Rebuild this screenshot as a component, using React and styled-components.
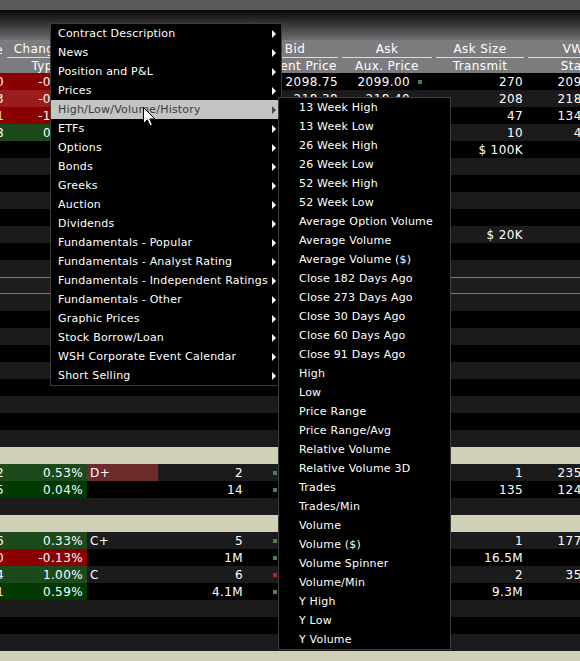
import React from "react";
import styled, { createGlobalStyle } from "styled-components";

const GlobalStyle = createGlobalStyle`
  html, body { margin: 0; padding: 0; background: #000; }
  body { overflow: hidden; }
`;

const Page = styled.div`
  position: relative;
  width: 580px;
  height: 661px;
  overflow: hidden;
  background: #000;
  font-family: "DejaVu Sans", Verdana, sans-serif;
`;

const TopStrip = styled.div`
  height: 10px;
  background: #5a5a5a;
`;

const HeaderFade = styled.div`
  height: 30px;
  background: linear-gradient(#080808 0%, #2a2a2a 35%, #6e6e71 100%);
`;

const HeaderRow = styled.div`
  display: flex;
  height: ${(p) => p.$h}px;
  background: #7c7c7f;
  color: #fff;
  font-size: 12px;
  letter-spacing: 0.4px;
  width: 640px;
`;

const HeadCell = styled.div`
  flex: 0 0 ${(p) => p.$w}px;
  min-width: 0;
  display: flex;
  justify-content: ${(p) => p.$justify || "center"};
  align-items: stretch;
  white-space: nowrap;
  padding: 0 2px;
  box-sizing: border-box;
`;

const HeadLabel = styled.div`
  flex: 1 1 auto;
  min-width: 0;
  display: flex;
  align-items: center;
  justify-content: ${(p) => p.$justify || "center"};
  border-bottom: ${(p) => (p.$line ? "1px solid #dcdcdc" : "none")};
  box-sizing: border-box;
  padding-top: 1px;
`;

const TONES = {
  black: "#000",
  dark: "#1b1b1b",
  beige: "#d0cfb8",
  section: "#1d1d1f",
};

const Row = styled.div`
  display: flex;
  height: 17px;
  width: 640px;
  box-sizing: border-box;
  background: ${(p) => TONES[p.$tone]};
  border-top: ${(p) => (p.$tone === "section" ? "1px solid #7b7b7b" : "none")};
  border-bottom: ${(p) => (p.$tone === "section" ? "1px solid #7b7b7b" : "none")};
  color: #fff;
  font-size: 12px;
  letter-spacing: 0.4px;
`;

const CELL_BG = {
  red: "#8a0000",
  redLight: "#9a1c1c",
  green: "#1d4a1d",
  greenDark: "#003a00",
  rating: "#6c2a2a",
};

const Cell = styled.div`
  flex: 0 0 ${(p) => p.$w}px;
  min-width: 0;
  display: flex;
  align-items: center;
  justify-content: ${(p) => (p.$left ? "flex-start" : "flex-end")};
  padding-left: ${(p) => p.$pl || 0}px;
  padding-right: ${(p) => p.$pr || 0}px;
  box-sizing: border-box;
  white-space: nowrap;
  background: ${(p) => (p.$bg ? CELL_BG[p.$bg] : "transparent")};
  gap: ${(p) => p.$gap || 0}px;
`;

const BidCell = styled.div`
  flex: 0 0 90px;
  min-width: 0;
  display: flex;
  align-items: center;
  padding-left: 23px;
  padding-right: 2px;
  box-sizing: border-box;
  white-space: nowrap;
`;

const Value = styled.span`
  margin-left: auto;
`;

const Marker = styled.span`
  width: 4px;
  height: 4px;
  flex: 0 0 4px;
  background: ${(p) => (p.$c === "r" ? "#c41e1e" : "#4c7f4c")};
`;

const Gap = styled.span`
  flex: 0 0 4px;
`;

const Menu = styled.div`
  position: absolute;
  left: ${(p) => p.$x}px;
  top: ${(p) => p.$y}px;
  width: ${(p) => p.$w}px;
  box-sizing: border-box;
  background: #000;
  border: 1px solid #3e3e3e;
  font-family: "DejaVu Sans", Verdana, sans-serif;
  font-size: 11px;
  letter-spacing: 0.2px;
  color: #fff;
  z-index: ${(p) => p.$z};
`;

const MenuItem = styled.div`
  height: 19px;
  display: flex;
  align-items: center;
  padding-left: ${(p) => p.$pl}px;
  padding-right: 5px;
  white-space: nowrap;
  background: ${(p) => (p.$active ? "#c4c4c4" : "transparent")};
  color: ${(p) => (p.$active ? "#3a3a3a" : "#fff")};
`;

const ArrowIcon = styled.svg`
  margin-left: auto;
  flex: 0 0 4px;
`;

const Cursor = styled.svg`
  position: absolute;
  left: 143px;
  top: 107px;
  z-index: 10;
`;

const mainItems = [
  "Contract Description",
  "News",
  "Position and P&L",
  "Prices",
  "High/Low/Volume/History",
  "ETFs",
  "Options",
  "Bonds",
  "Greeks",
  "Auction",
  "Dividends",
  "Fundamentals - Popular",
  "Fundamentals - Analyst Rating",
  "Fundamentals - Independent Ratings",
  "Fundamentals - Other",
  "Graphic Prices",
  "Stock Borrow/Loan",
  "WSH Corporate Event Calendar",
  "Short Selling",
];

const subItems = [
  "13 Week High",
  "13 Week Low",
  "26 Week High",
  "26 Week Low",
  "52 Week High",
  "52 Week Low",
  "Average Option Volume",
  "Average Volume",
  "Average Volume ($)",
  "Close 182 Days Ago",
  "Close 273 Days Ago",
  "Close 30 Days Ago",
  "Close 60 Days Ago",
  "Close 91 Days Ago",
  "High",
  "Low",
  "Price Range",
  "Price Range/Avg",
  "Relative Volume",
  "Relative Volume 3D",
  "Trades",
  "Trades/Min",
  "Volume",
  "Volume ($)",
  "Volume Spinner",
  "Volume/Min",
  "Y High",
  "Y Low",
  "Y Volume",
];

const rows = [
  { tone: "black", bg: "red", c1: "2098.50", c2: "-0.05%", bid: "2098.75", ask: "2099.00", askMark: "g", size: "270", vw: "2098.89" },
  { tone: "dark", bg: "redLight", c1: "218.33", c2: "-0.12%", bid: "218.38", ask: "218.40", size: "208", vw: "218.392" },
  { tone: "black", bg: "red", c1: "134.41", c2: "-1.10%", bid: "134.05", ask: "134.08", size: "47", vw: "134.065" },
  { tone: "dark", bg: "green", c1: "41.18", c2: "0.83%", bid: "41.24", ask: "41.26", size: "10", vw: "41.25" },
  { tone: "black", size: "$ 100K" },
  { tone: "dark" },
  { tone: "black" },
  { tone: "dark" },
  { tone: "black" },
  { tone: "dark", size: "$ 20K" },
  { tone: "black" },
  { tone: "dark" },
  { tone: "section" },
  { tone: "dark" },
  { tone: "black" },
  { tone: "dark" },
  { tone: "black" },
  { tone: "dark" },
  { tone: "black" },
  { tone: "dark" },
  { tone: "black" },
  { tone: "dark" },
  { tone: "beige" },
  { tone: "dark", bg: "green", c1: "112", c2: "0.53%", rating: "D+", ratingBg: true, c4: "2", bidMark: "g", size: "1", vw: "2350.75" },
  { tone: "black", bg: "greenDark", c1: "25", c2: "0.04%", c4: "14", bidMark: "g", size: "135", vw: "1245.25" },
  { tone: "dark" },
  { tone: "beige" },
  { tone: "dark", bg: "green", c1: "56", c2: "0.33%", rating: "C+", c4: "5", bidMark: "g", size: "1", vw: "1775.50" },
  { tone: "black", bg: "red", c1: "90", c2: "-0.13%", c4: "1M", bidMark: "g", size: "16.5M" },
  { tone: "dark", bg: "green", c1: "34", c2: "1.00%", rating: "C", c4: "6", bidMark: "r", size: "2", vw: "355.25" },
  { tone: "black", bg: "greenDark", c1: "1", c2: "0.59%", c4: "4.1M", bidMark: "g", size: "9.3M" },
  { tone: "dark" },
  { tone: "black" },
  { tone: "dark" },
  { tone: "beige" },
];

function Arrow({ color }) {
  return (
    <ArrowIcon width="4" height="8" viewBox="0 0 4 8">
      <polygon points="0,0 4,4 0,8" fill={color} />
    </ArrowIcon>
  );
}

export default function App() {
  return (
    <>
      <GlobalStyle />
      <Page>
        <TopStrip />
        <HeaderFade />
        <HeaderRow $h={18}>
          <HeadCell $w={5} $justify="flex-end">
            <HeadLabel $justify="flex-end">Price</HeadLabel>
          </HeadCell>
          <HeadCell $w={82}>
            <HeadLabel $line>Change %</HeadLabel>
          </HeadCell>
          <HeadCell $w={71}>
            <HeadLabel $line>Rating</HeadLabel>
          </HeadCell>
          <HeadCell $w={92}>
            <HeadLabel $line>Bid Size</HeadLabel>
          </HeadCell>
          <HeadCell $w={90}>
            <HeadLabel $line>Bid</HeadLabel>
          </HeadCell>
          <HeadCell $w={94}>
            <HeadLabel $line>Ask</HeadLabel>
          </HeadCell>
          <HeadCell $w={92}>
            <HeadLabel $line>Ask Size</HeadLabel>
          </HeadCell>
          <HeadCell $w={110}>
            <HeadLabel $line>VWAP</HeadLabel>
          </HeadCell>
        </HeaderRow>
        <HeaderRow $h={15}>
          <HeadCell $w={5} />
          <HeadCell $w={82}>
            <HeadLabel>Type</HeadLabel>
          </HeadCell>
          <HeadCell $w={71}>
            <HeadLabel>Action</HeadLabel>
          </HeadCell>
          <HeadCell $w={92}>
            <HeadLabel>Quantity</HeadLabel>
          </HeadCell>
          <HeadCell $w={90}>
            <HeadLabel>Current Price</HeadLabel>
          </HeadCell>
          <HeadCell $w={94}>
            <HeadLabel>Aux. Price</HeadLabel>
          </HeadCell>
          <HeadCell $w={92}>
            <HeadLabel>Transmit</HeadLabel>
          </HeadCell>
          <HeadCell $w={110}>
            <HeadLabel>Status</HeadLabel>
          </HeadCell>
        </HeaderRow>

        {rows.map((r, i) => (
          <Row key={i} $tone={r.tone}>
            <Cell $w={5} $pr={1} $bg={r.bg}>{r.c1}</Cell>
            <Cell $w={82} $pr={4} $bg={r.bg}>{r.c2}</Cell>
            <Cell $w={71} $left $pl={3} $bg={r.ratingBg ? "rating" : undefined}>
              {r.rating}
            </Cell>
            <Cell $w={92} $pr={7}>{r.c4}</Cell>
            <BidCell>
              {r.bidMark ? <Marker $c={r.bidMark} /> : <Gap />}
              <Value>{r.bid}</Value>
            </BidCell>
            <Cell $w={94} $pr={12} $gap={8}>
              {r.ask}
              {r.askMark ? <Marker $c={r.askMark} /> : r.ask ? <Gap /> : null}
            </Cell>
            <Cell $w={92} $pr={3}>{r.size}</Cell>
            <Cell $w={110} $pr={26}>{r.vw}</Cell>
          </Row>
        ))}

        <Menu $x={50} $y={23} $w={232} $z={2}>
          {mainItems.map((t, i) => (
            <MenuItem key={t} $pl={7} $active={i === 4}>
              {t}
              <Arrow color={i === 4 ? "#4a4a4a" : "#fff"} />
            </MenuItem>
          ))}
        </Menu>

        <Menu $x={278} $y={97} $w={173} $z={3}>
          {subItems.map((t) => (
            <MenuItem key={t} $pl={20}>
              {t}
            </MenuItem>
          ))}
        </Menu>

        <Cursor width="13" height="20" viewBox="0 0 13 20">
          <path
            d="M0.5 0.5 L0.5 16.5 L4.3 12.8 L7 18.8 L9.4 17.8 L6.8 11.9 L11.8 11.9 Z"
            fill="#fff"
            stroke="#000"
            strokeWidth="1"
            strokeLinejoin="miter"
          />
        </Cursor>
      </Page>
    </>
  );
}
